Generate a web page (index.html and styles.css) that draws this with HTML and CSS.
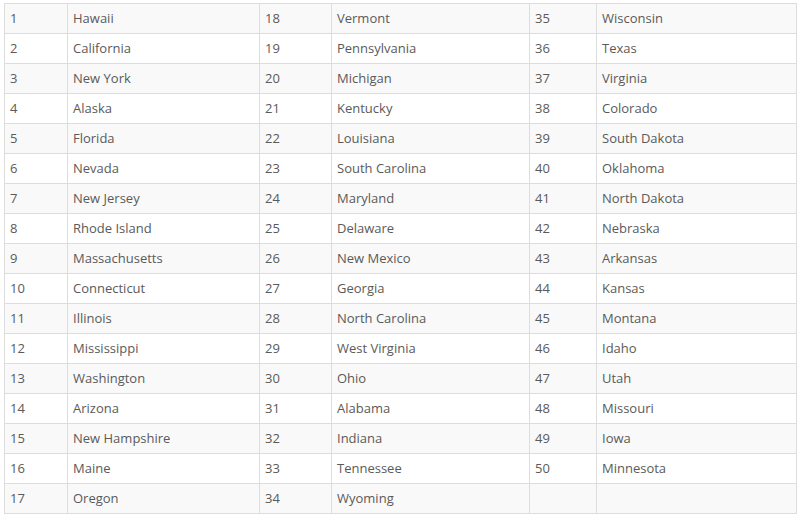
FILE: index.html
```html
<!DOCTYPE html>
<html>
<head>
<meta charset="utf-8">
<link rel="stylesheet" href="styles.css">
</head>
<body>
<table class="states">
<colgroup>
<col class="c-num1"><col class="c-name1"><col class="c-num2"><col class="c-name2"><col class="c-num3"><col class="c-name3">
</colgroup>
<tbody>
<tr><td>1</td><td>Hawaii</td><td>18</td><td>Vermont</td><td>35</td><td>Wisconsin</td></tr>
<tr><td>2</td><td>California</td><td>19</td><td>Pennsylvania</td><td>36</td><td>Texas</td></tr>
<tr><td>3</td><td>New York</td><td>20</td><td>Michigan</td><td>37</td><td>Virginia</td></tr>
<tr><td>4</td><td>Alaska</td><td>21</td><td>Kentucky</td><td>38</td><td>Colorado</td></tr>
<tr><td>5</td><td>Florida</td><td>22</td><td>Louisiana</td><td>39</td><td>South Dakota</td></tr>
<tr><td>6</td><td>Nevada</td><td>23</td><td>South Carolina</td><td>40</td><td>Oklahoma</td></tr>
<tr><td>7</td><td>New Jersey</td><td>24</td><td>Maryland</td><td>41</td><td>North Dakota</td></tr>
<tr><td>8</td><td>Rhode Island</td><td>25</td><td>Delaware</td><td>42</td><td>Nebraska</td></tr>
<tr><td>9</td><td>Massachusetts</td><td>26</td><td>New Mexico</td><td>43</td><td>Arkansas</td></tr>
<tr><td>10</td><td>Connecticut</td><td>27</td><td>Georgia</td><td>44</td><td>Kansas</td></tr>
<tr><td>11</td><td>Illinois</td><td>28</td><td>North Carolina</td><td>45</td><td>Montana</td></tr>
<tr><td>12</td><td>Mississippi</td><td>29</td><td>West Virginia</td><td>46</td><td>Idaho</td></tr>
<tr><td>13</td><td>Washington</td><td>30</td><td>Ohio</td><td>47</td><td>Utah</td></tr>
<tr><td>14</td><td>Arizona</td><td>31</td><td>Alabama</td><td>48</td><td>Missouri</td></tr>
<tr><td>15</td><td>New Hampshire</td><td>32</td><td>Indiana</td><td>49</td><td>Iowa</td></tr>
<tr><td>16</td><td>Maine</td><td>33</td><td>Tennessee</td><td>50</td><td>Minnesota</td></tr>
<tr><td>17</td><td>Oregon</td><td>34</td><td>Wyoming</td><td></td><td></td></tr>
</tbody>
</table>
</body>
</html>
```
FILE: styles.css
```css
html, body {
  margin: 0;
  padding: 0;
  background: #ffffff;
}
body {
  padding: 3px 0 0 4px;
}
.states {
  border-collapse: collapse;
  table-layout: fixed;
  width: 792px;
  font-family: "Open Sans", "Noto Sans", sans-serif;
  font-size: 13px;
  color: #5a5a5a;
  border: 1px solid #dddddd;
}
.c-num1 { width: 63px; }
.c-name1 { width: 192px; }
.c-num2 { width: 72px; }
.c-name2 { width: 198px; }
.c-num3 { width: 67px; }
.c-name3 { width: 200px; }
.states td {
  border: 1px solid #dddddd;
  height: 30px;
  padding: 0 5px 2px;
  box-sizing: border-box;
  vertical-align: middle;
  line-height: 16px;
}
.states tr:nth-child(odd) td {
  background: #f9f9f9;
}
```
